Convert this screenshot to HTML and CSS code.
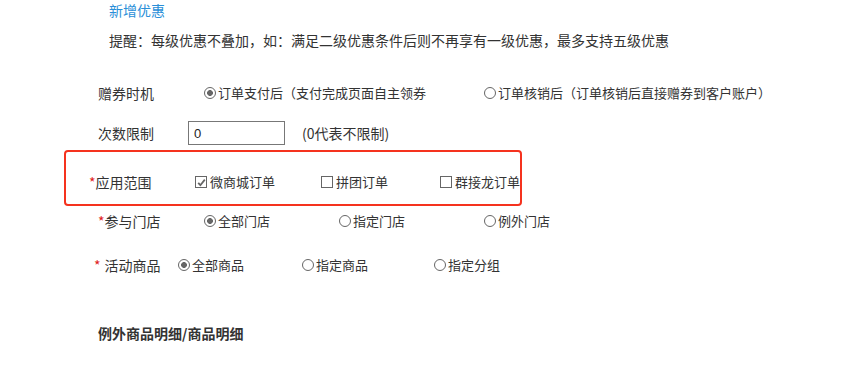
FILE: index.html
```html
<!DOCTYPE html>
<html lang="zh-CN">
<head>
  <meta charset="UTF-8" />
  <title>新增优惠</title>
  <link rel="stylesheet" href="styles.css">
</head>
<body>
  <div class="page">
    <div class="title">新增优惠</div>
    <div class="tip">提醒：每级优惠不叠加，如：满足二级优惠条件后则不再享有一级优惠，最多支持五级优惠</div>

    <div class="row row-timing">
      <div class="label">赠券时机</div>
      <label class="opt"><span class="radio checked"></span>订单支付后（支付完成页面自主领券</label>
      <label class="opt"><span class="radio"></span>订单核销后（订单核销后直接赠券到客户账户）</label>
    </div>

    <div class="row row-limit">
      <div class="label">次数限制</div>
      <input class="num" type="text" value="0">
      <span class="hint">(0代表不限制)</span>
    </div>

    <div class="row scope-box">
      <div class="label"><span class="req">*</span>应用范围</div>
      <label class="opt"><span class="check checked">
        <svg width="9" height="9" viewBox="0 0 9 9"><path d="M1.2 4.8 L3.4 7.2 L7.8 1.6" fill="none" stroke="#666" stroke-width="1.8"/></svg>
      </span>微商城订单</label>
      <label class="opt"><span class="check"></span>拼团订单</label>
      <label class="opt"><span class="check"></span>群接龙订单</label>
    </div>

    <div class="row row-store">
      <div class="label"><span class="req">*</span>参与门店</div>
      <label class="opt"><span class="radio checked"></span>全部门店</label>
      <label class="opt"><span class="radio"></span>指定门店</label>
      <label class="opt"><span class="radio"></span>例外门店</label>
    </div>

    <div class="row row-goods">
      <div class="label"><span class="req req-gap">*</span>活动商品</div>
      <label class="opt"><span class="radio checked"></span>全部商品</label>
      <label class="opt"><span class="radio"></span>指定商品</label>
      <label class="opt"><span class="radio"></span>指定分组</label>
    </div>

    <div class="section">例外商品明细/商品明细</div>
  </div>
</body>
</html>
```

FILE: styles.css
```css
body {
  margin: 0;
  background: #fff;
  color: #333;
  font-family: "Noto Sans CJK SC", "Noto Sans", sans-serif;
}

.page {
  width: 844px;
}

.title {
  padding-left: 109px;
  line-height: 20px;
  font-size: 14px;
  color: #2a8fd8;
}

.tip {
  margin-top: 10px;
  padding-left: 109px;
  line-height: 20px;
  font-size: 14px;
}

.row {
  display: flex;
  align-items: center;
  height: 30px;
}

.label {
  flex: none;
  font-size: 14px;
  line-height: 20px;
}

.opt {
  flex: none;
  display: flex;
  align-items: center;
  font-size: 13px;
  line-height: 20px;
}

.req {
  color: #e02020;
}

.req-gap {
  margin-right: 4px;
}

/* 单选框 */
.radio {
  width: 10px;
  height: 10px;
  border: 1px solid #666;
  border-radius: 50%;
  margin-right: 2px;
  box-sizing: content-box;
  background: #fff;
}

.radio.checked {
  background: radial-gradient(circle, #666 0, #666 2.6px, #fff 3.2px);
}

/* 复选框 */
.check {
  width: 10px;
  height: 10px;
  border: 1px solid #666;
  margin-right: 3px;
  display: flex;
  align-items: center;
  justify-content: center;
}

/* 赠券时机 */
.row-timing {
  margin-top: 28px;
  padding-left: 98px;
}
.row-timing .label { width: 106px; }
.row-timing .opt:nth-of-type(1) { width: 280px; }

/* 次数限制 */
.row-limit {
  margin-top: 10px;
  padding-left: 98px;
}
.row-limit .label { width: 90px; }

.num {
  width: 97px;
  height: 24px;
  box-sizing: border-box;
  border: 1px solid #777;
  padding: 0 5px;
  font-family: "Liberation Sans", sans-serif;
  font-size: 13px;
  color: #222;
  outline: none;
}

.hint {
  margin-left: 17px;
  font-size: 14px;
}

/* 应用范围 */
.scope-box {
  margin-top: 2px;
  margin-left: 64px;
  width: 458px;
  height: 56px;
  box-sizing: border-box;
  border: 2px solid #f5321e;
  border-radius: 4px;
  padding: 8px 0 0 23px;
}
.scope-box .label { width: 106px; }
.scope-box .opt:nth-of-type(1) { width: 126px; }
.scope-box .opt:nth-of-type(2) { width: 119px; }

/* 参与门店 */
.row-store {
  padding-left: 98px;
}
.row-store .label { width: 106px; }
.row-store .opt:nth-of-type(1) { width: 135px; }
.row-store .opt:nth-of-type(2) { width: 145px; }

/* 活动商品 */
.row-goods {
  margin-top: 14px;
  padding-left: 94px;
}
.row-goods .label { width: 84px; }
.row-goods .opt:nth-of-type(1) { width: 124px; }
.row-goods .opt:nth-of-type(2) { width: 132px; }

.section {
  margin-top: 43px;
  padding-left: 98px;
  line-height: 20px;
  font-size: 14px;
  font-weight: bold;
}
```
